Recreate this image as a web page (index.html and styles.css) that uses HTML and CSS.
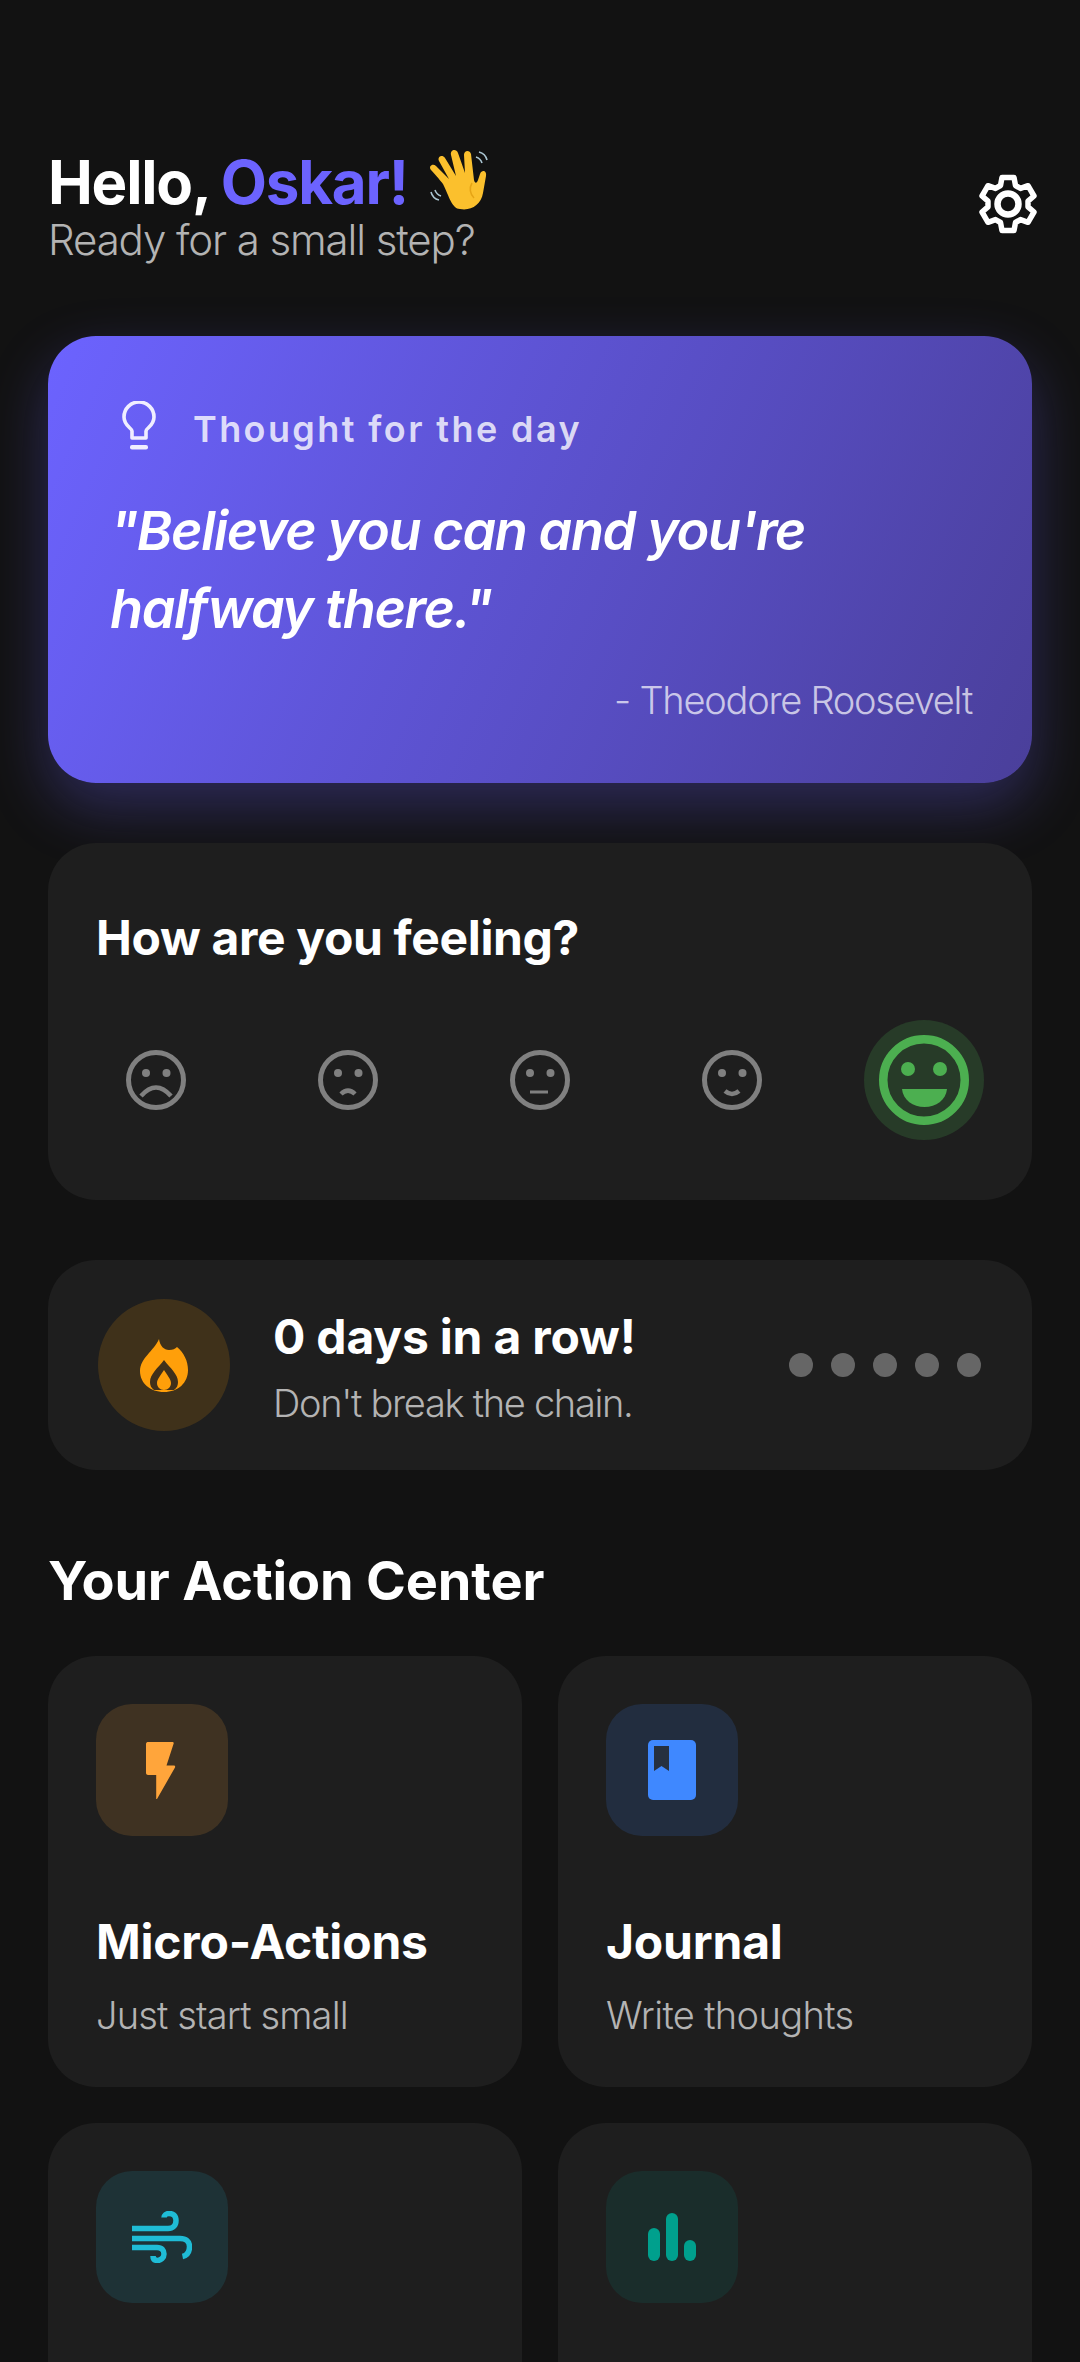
FILE: index.html
```html
<!DOCTYPE html>
<html lang="en">
<head>
<meta charset="utf-8">
<title>Home</title>
<link rel="stylesheet" href="styles.css">
</head>
<body>
<main class="screen">
  <header class="header">
    <div class="header-text">
      <h1 class="greeting">Hello, <span class="accent">Oskar!</span>
        <svg class="wave" viewBox="0 0 66 66" aria-hidden="true">
          <g fill="#fbc02d">
            <path d="M15 36C12 32 5 24 3 22c-3-4 2-7 5-4l13 13-10-18c-2-4 3-7 6-3l11 18-5-21c-1-5 5-7 7-2l7 20-1-18c0-5 6-5 7-1l3 26c1 4 3 3 4 0l2-6c2-5 7-3 6 2l-3 17c-2 12-12 18-23 16C24 61 21 48 15 36z"/>
          </g>
          <path d="M46 50c-4-4-5-10-2-15" fill="none" stroke="#e6a416" stroke-width="1.5"/>
          <path d="M51 4c4 1 7 4 8 8M48 9c3 1 5 3 6 6M3 44c1 4 4 7 8 8M7 42c1 3 3 5 6 6" fill="none" stroke="#a9c4d0" stroke-width="1.6"/>
        </svg>
      </h1>
      <p class="subtitle">Ready for a small step?</p>
    </div>
    <svg class="gear" viewBox="0 0 60 60" aria-hidden="true">
      <path d="M24 3.500h12l1.500 8 5 2.900 7.500-2.700 6 10.300-6 5.200v5.600l6 5.200-6 10.300-7.500-2.700-5 2.900-1.500 8H24l-1.500-8-5-2.900-7.500 2.700-6-10.300 6-5.200v-5.600l-6-5.200 6-10.300 7.500 2.700 5-2.900z" fill="none" stroke="#fff" stroke-width="5.500" stroke-linejoin="round"/>
      <circle cx="30" cy="30" r="10.500" fill="none" stroke="#fff" stroke-width="6.500"/>
    </svg>
  </header>

  <section class="quote-card">
    <div class="quote-label">
      <svg class="bulb" viewBox="0 0 36 50" aria-hidden="true">
        <path d="M11 37v-7c0-3-8-5-8-14a15 15 0 0 1 30 0c0 9-8 11-8 14v7z" fill="none" stroke="#f0eeff" stroke-width="3.600" stroke-linejoin="round"/>
        <rect x="9" y="44" width="18" height="4.500" rx="2" fill="#f0eeff"/>
      </svg>
      <span class="quote-title">Thought for the day</span>
    </div>
    <p class="quote-text">"Believe you can and you're halfway there."</p>
    <p class="quote-author">- Theodore Roosevelt</p>
  </section>

  <section class="card mood-card">
    <h2 class="card-heading">How are you feeling?</h2>
    <div class="mood-row">
      <span class="mood"><svg class="face" viewBox="0 0 60 60"><circle cx="30" cy="30" r="27.500" class="ring"/><circle cx="20" cy="23" r="4" class="fill"/><circle cx="40.500" cy="23" r="4" class="fill"/><path d="M15 46Q30 29 45 46" class="line"/></svg></span>
      <span class="mood"><svg class="face" viewBox="0 0 60 60"><circle cx="30" cy="30" r="27.500" class="ring"/><circle cx="20" cy="23" r="4" class="fill"/><circle cx="40.500" cy="23" r="4" class="fill"/><path d="M23 44Q30 37 37 44" class="line"/></svg></span>
      <span class="mood"><svg class="face" viewBox="0 0 60 60"><circle cx="30" cy="30" r="27.500" class="ring"/><circle cx="20" cy="23" r="4" class="fill"/><circle cx="40.500" cy="23" r="4" class="fill"/><path d="M20 42h18" class="line thin"/></svg></span>
      <span class="mood"><svg class="face" viewBox="0 0 60 60"><circle cx="30" cy="30" r="27.500" class="ring"/><circle cx="20" cy="23" r="4" class="fill"/><circle cx="40.500" cy="23" r="4" class="fill"/><path d="M23 41Q30 47 37 41" class="line"/></svg></span>
      <span class="mood mood-active"><svg class="face-active" viewBox="0 0 90 90"><circle cx="45" cy="45" r="40.750" fill="none" stroke="#4caf50" stroke-width="8.500"/><circle cx="29" cy="34" r="7" fill="#4caf50"/><circle cx="61" cy="34" r="7" fill="#4caf50"/><path d="M23 54h45c-1 11-11 18-22.500 18S24 65 23 54z" fill="#4caf50"/></svg></span>
    </div>
  </section>

  <section class="card streak-card">
    <div class="streak-icon">
      <svg class="flame" viewBox="0 0 48 53" aria-hidden="true">
        <path d="M19 0c1 7 5 11 10 11 4 0 6-1 8-3 7 6 11 14 11 23 0 13-10 22-24 22S0 44 0 32C0 19 14 12 19 0z" fill="#ff9f0a"/>
        <path d="M24 21c-6 8-14 14-14 22 0 3 1 6 4 8h20c3-2 4-5 4-8 0-8-8-14-14-22z" fill="#40301a"/>
        <path d="M24 31c-3 5-7 9-7 13 0 4 3 7 7 7s7-3 7-7c0-4-4-8-7-13z" fill="#ff9f0a"/>
      </svg>
    </div>
    <div class="streak-text">
      <h2 class="streak-title">0 days in a row!</h2>
      <p class="streak-sub">Don't break the chain.</p>
    </div>
    <div class="dots"><i class="dot"></i><i class="dot"></i><i class="dot"></i><i class="dot"></i><i class="dot"></i></div>
  </section>

  <h2 class="section-title">Your Action Center</h2>
  <div class="action-grid">
    <article class="card action">
      <div class="tile tile-orange">
        <svg class="icon-bolt" viewBox="0 0 30 57"><path d="M1.500 0h25c1 0 1.500 1 1 2L20.500 23.500h7c1.500 0 2 1 1.500 2L11 57c-.3.500-.8.300-.8-.3V33H2c-1 0-2-1-2-2V2C0 1 .7 0 1.500 0z" fill="#ffa53b"/></svg>
      </div>
      <h3 class="action-title">Micro-Actions</h3>
      <p class="action-sub">Just start small</p>
    </article>
    <article class="card action">
      <div class="tile tile-blue">
        <svg class="icon-book" viewBox="0 0 48 60"><rect width="48" height="60" rx="5" fill="#3f88ff"/><path d="M6 6h15v25l-7.500-5L6 31z" fill="#26303f"/></svg>
      </div>
      <h3 class="action-title">Journal</h3>
      <p class="action-sub sub-journal">Write thoughts</p>
    </article>
    <article class="card action">
      <div class="tile tile-cyan">
        <svg class="icon-wind" viewBox="0 0 60 52" fill="none" stroke="#1fbcd6" stroke-width="5.500"><path d="M0 17.500h36c5 0 8-3 8-8s-3-7-7-7c-3 0-5 2-5 4"/><path d="M0 27.500h48c6 0 9.500 3 9.500 8s-2 9-7 10"/><path d="M0 36.500h25c5 0 7 3 7 6.500s-3 6.500-6.500 6.500-4.500-2-4.500-4.500"/></svg>
      </div>
    </article>
    <article class="card action">
      <div class="tile tile-teal">
        <svg class="icon-bars" viewBox="0 0 48 48" fill="#00a08d"><rect x="0" y="15" width="12" height="33" rx="6"/><rect x="18" y="0" width="12" height="48" rx="6"/><rect x="36" y="27" width="12" height="21" rx="6"/></svg>
      </div>
    </article>
  </div>
</main>
</body>
</html>
```

FILE: styles.css
```css
* { box-sizing: border-box; }
html, body { margin: 0; padding: 0; height: 2362px; overflow: hidden; background: #121212; }
body { font-family: Inter, "Liberation Sans", sans-serif; color: #fff; }
h1, h2, h3, p { margin: 0; }

.screen { padding: 146px 48px 0; display: flex; flex-direction: column; }

.header { display: flex; justify-content: space-between; align-items: flex-start; height: 120px; }
.greeting { font-size: 60px; line-height: 72px; font-weight: 700; letter-spacing: -1.2px; display: flex; align-items: center; gap: 10px; white-space: nowrap; }
.accent { color: #6c63ff; }
.wave { width: 66px; height: 66px; margin-left: 10px; margin-top: -2px; }
.subtitle { font-size: 42px; line-height: 48px; font-weight: 300; color: #b3b3b3; margin-top: -2px; letter-spacing: -1.1px; }
.gear { width: 60px; height: 60px; margin-right: -6px; margin-top: 28px; }

.quote-card { margin-top: 70px; height: 447px; border-radius: 48px; padding: 66px 60px 0 62px; background: linear-gradient(114deg, #6c63ff 0%, #4a3f9a 100%); box-shadow: 0 24px 60px rgba(108, 99, 255, 0.3); }
.quote-label { display: flex; align-items: center; gap: 36px; height: 54px; }
.bulb { width: 36px; height: 50px; flex: none; margin-left: 11px; margin-bottom: 6px; }
.quote-title { font-size: 36px; font-weight: 600; letter-spacing: 2.4px; color: rgba(255, 255, 255, 0.8); }
.quote-text { margin-top: 36px; font-size: 54px; line-height: 78px; font-weight: 600; font-style: italic; letter-spacing: -1.4px; max-width: 760px; }
.quote-author { margin-top: 30px; text-align: right; font-size: 38px; line-height: 44px; font-weight: 300; letter-spacing: -1.25px; color: rgba(255, 255, 255, 0.7); }

.card { background: #1e1e1e; border-radius: 48px; }
.mood-card { margin-top: 60px; height: 357px; padding: 66px 48px 0; }
.card-heading { font-size: 48px; line-height: 58px; font-weight: 700; letter-spacing: -0.35px; }
.mood-row { display: flex; justify-content: space-between; align-items: center; margin-top: 53px; }
.mood { width: 120px; height: 120px; display: flex; align-items: center; justify-content: center; border-radius: 50%; }
.mood-active { background: rgba(76, 175, 80, 0.2); }
.face { width: 60px; height: 60px; }
.face .ring { fill: none; stroke: #808080; stroke-width: 5; }
.face .fill { fill: #808080; }
.face .line { fill: none; stroke: #808080; stroke-width: 4.5; }
.face .thin { stroke-width: 3; }
.face-active { width: 90px; height: 90px; }

.streak-card { margin-top: 60px; height: 210px; padding: 0 51px 0 50px; display: flex; align-items: center; }
.streak-icon { width: 132px; height: 132px; flex: none; border-radius: 50%; background: rgba(255, 159, 10, 0.15); display: flex; align-items: center; justify-content: center; }
.flame { width: 48px; height: 53px; }
.streak-text { flex: 1; margin-left: 43px; margin-top: 3px; }
.streak-title { font-size: 48px; line-height: 58px; font-weight: 700; letter-spacing: -0.2px; }
.streak-sub { font-size: 38px; line-height: 44px; font-weight: 300; letter-spacing: -1.3px; color: #b3b3b3; margin-top: 15px; }
.dots { display: flex; gap: 18px; }
.dot { width: 24px; height: 24px; border-radius: 50%; background: #666; display: block; }

.section-title { margin-top: 79px; font-size: 54px; line-height: 64px; font-weight: 700; letter-spacing: -0.15px; }

.action-grid { margin-top: 43px; display: grid; grid-template-columns: 1fr 1fr; gap: 36px; grid-auto-rows: 431px; }
.action { padding: 48px; }
.tile { width: 132px; height: 132px; border-radius: 36px; display: flex; align-items: center; justify-content: center; }
.tile-orange { background: rgba(255, 165, 59, 0.15); }
.tile-blue { background: rgba(63, 136, 255, 0.15); }
.tile-cyan { background: rgba(31, 188, 214, 0.13); }
.tile-teal { background: rgba(0, 160, 141, 0.12); }
.icon-bolt { width: 30px; height: 57px; margin-left: -2px; }
.icon-book { width: 48px; height: 60px; }
.icon-wind { width: 60px; height: 52px; }
.icon-bars { width: 48px; height: 48px; }
.action-title { margin-top: 77px; font-size: 48px; line-height: 58px; font-weight: 700; letter-spacing: -0.2px; }
.action-sub { margin-top: 22px; font-size: 38px; line-height: 44px; font-weight: 300; letter-spacing: -0.85px; color: #b3b3b3; }
.sub-journal { letter-spacing: -0.65px; }
```
